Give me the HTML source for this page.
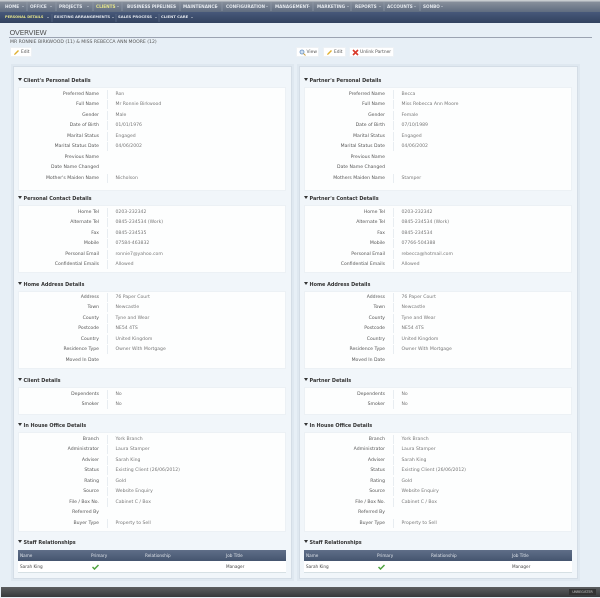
<!DOCTYPE html>
<html><head><meta charset="utf-8"><style>
html,body{margin:0;padding:0;background:#e7eff6}
body{width:600px;height:598px;position:relative;overflow:hidden;font-family:"DejaVu Sans","Liberation Sans",sans-serif;font-size:4.6px;color:#666}
div,span,b,i,a{position:absolute;white-space:nowrap}
#w{left:0;top:0;width:600px;height:598px;filter:blur(.3px)}
#t1{left:0;top:0;width:600px;height:12px;background:linear-gradient(#c8ccd0 0,#c8ccd0 1px,#878f9b 2px,#5f6c80 12px)}
#t2{left:0;top:12px;width:600px;height:10.5px;background:linear-gradient(#47587a,#32425f)}
.n{top:4px;color:#e4e8ee;font-weight:bold;font-size:4.2px;line-height:5px}
.n2{top:15px;color:#e4e8ee;font-weight:bold;font-size:3.75px;line-height:5px}
.y{color:#e6e58c}
#ov{left:9.5px;top:28px;font-size:7.4px;line-height:9px;color:#555;letter-spacing:-.3px}
#ln{left:9px;top:36.5px;width:583px;height:1px;background:#9ba3b1}
#nm{left:10px;top:39.5px;font-size:4.6px;line-height:6px;color:#555}
.btn{height:10px;box-sizing:border-box;background:#fff;border:1px solid #edf1f5;border-radius:1px;color:#555;line-height:8px;font-size:4.4px}
.btn span{top:1.2px}
.p{top:66px;width:277px;height:511px;background:#f1f6fa;border:1px solid #d4dde6;box-shadow:0 0 0 2px #dfe8f0}
.box{left:4px;width:268px;background:#fdfefe;border:1px solid #ecf1f5;box-sizing:border-box}
.h{left:4px;font-weight:bold;color:#333;font-size:4.9px;line-height:6px}
.h:before{content:"";display:inline-block;border:2px solid transparent;border-top:3px solid #333;border-bottom:0;margin-right:1.5px;vertical-align:.4px}
.r{left:0;width:100%;height:10.45px;line-height:10.45px;margin-top:1.5px}
.u .r{margin-top:.6px}
.r b{right:186px;font-weight:normal;color:#555;top:0}
.r i{left:87.5px;font-style:normal;color:#777;top:0;padding-left:8px;height:9px;line-height:10px}
.r i:not(:empty){border-left:1px solid #e8edf1}
.th{left:4px;width:268px;height:11px;background:linear-gradient(#5f6e88,#45556f);color:#dfe4ea;line-height:11px;font-size:4.2px}
.td{left:4px;width:268px;height:11px;background:#fff;border-bottom:1px solid #d6e0e4;color:#444;line-height:11px;font-size:4.2px}
.th span,.td span{position:absolute}
#ft{left:1px;top:587px;width:599px;height:10px;background:linear-gradient(#5c5e60,#37393b)}
#lg{left:569px;top:589px;width:27px;height:6px;background:#333;color:#ccc;font-size:3.2px;line-height:6px;text-align:center}
svg{position:absolute}
</style></head><body><div id="w">
<div id="t1"></div><div id="t2"></div>
<svg style="left:0;top:0" width="600" height="23" viewBox="0 0 600 23"><g stroke="#8f99a8" stroke-width=".7"><path d="M27 2V11M56 2V11M93 2V11M122 2V11M180 2V11M222 2V11M271 2V11M313 2V11M351 2V11M384 2V11M420 2V11"/></g><g stroke="#5d6d88" stroke-width=".7"><path d="M52 14V22M116 14V22M159 14V22"/></g><g fill="none" stroke="#c8ced8" stroke-width=".5"><path d="M22 6L23 7 24 6M50 6L51 7 52 6M87 6L88 7 89 6M117 6L118 7 119 6M174 6L175 7 176 6M216 6L217 7 218 6M266 6L267 7 268 6M308 6L309 7 310 6M347 6L348 7 349 6M379 6L380 7 381 6M414 6L415 7 416 6M441 6L442 7 443 6M47 17L48 18 49 17M112 17L113 18 114 17M155 17L156 18 157 17M191 17L192 18 193 17"/></g></svg>
<span class="n" style="left:5px">HOME</span><span class="n" style="left:30px">OFFICE</span><span class="n" style="left:59px">PROJECTS</span><span class="n y" style="left:96px">CLIENTS</span><span class="n" style="left:127px">BUSINESS PIPELINES</span><span class="n" style="left:183px">MAINTENANCE</span><span class="n" style="left:226px">CONFIGURATION</span><span class="n" style="left:275px">MANAGEMENT</span><span class="n" style="left:317px">MARKETING</span><span class="n" style="left:355px">REPORTS</span><span class="n" style="left:387px">ACCOUNTS</span><span class="n" style="left:423px">SONBO</span>
<span class="n2 y" style="left:5px;font-size:3.5px">PERSONAL DETAILS</span><span class="n2" style="left:54px">EXISTING ARRANGEMENTS</span><span class="n2" style="left:118px">SALES PROCESS</span><span class="n2" style="left:161px">CLIENT CARE</span>
<div id="ov">OVERVIEW</div><div id="ln"></div>
<div id="nm">MR RONNIE BIRKWOOD (11) &amp; MISS REBECCA ANN MOORE (12)</div>

<div class="btn" style="left:10px;top:47px;width:22px"><svg style="left:2px;top:1px" width="7" height="7" viewBox="0 0 7 7"><path d="M1 6L1.5 4.5 5 1 6 2 2.5 5.5Z" fill="#e0b030"/></svg><span style="left:10px">Edit</span></div>
<div class="btn" style="left:296px;top:47px;width:23px"><svg style="left:2px;top:1px" width="7" height="7" viewBox="0 0 7 7"><circle cx="3" cy="3" r="2" fill="#cfe0f2" stroke="#6b93c4" stroke-width=".8"/><path d="M4.5 4.5L6.5 6.5" stroke="#c9a040"/></svg><span style="left:9.5px">View</span></div>
<div class="btn" style="left:323px;top:47px;width:23px"><svg style="left:2px;top:1px" width="7" height="7" viewBox="0 0 7 7"><path d="M1 6L1.5 4.5 5 1 6 2 2.5 5.5Z" fill="#e0b030"/></svg><span style="left:10px">Edit</span></div>
<div class="btn" style="left:349px;top:47px;width:45px"><svg style="left:2px;top:1px" width="7" height="7" viewBox="0 0 7 7"><path d="M1 1L6 6M6 1L1 6" stroke="#d93a2b" stroke-width="1.6"/></svg><span style="left:10px">Unlink Partner</span></div>

<div class="p" style="left:13px">
<div class="h" style="top:10.5px">Client's Personal Details</div>
<div class="box" style="top:20px;height:104px"><div class="r" style="top:0"><b>Preferred Name</b><i>Ron</i></div><div class="r" style="top:10.5px"><b>Full Name</b><i>Mr Ronnie Birkwood</i></div><div class="r" style="top:21px"><b>Gender</b><i>Male</i></div><div class="r" style="top:31.5px"><b>Date of Birth</b><i>01/01/1976</i></div><div class="r" style="top:42px"><b>Marital Status</b><i>Engaged</i></div><div class="r" style="top:52.5px"><b>Marital Status Date</b><i>04/06/2002</i></div><div class="r" style="top:63px"><b>Previous Name</b><i></i></div><div class="r" style="top:73.5px"><b>Date Name Changed</b><i></i></div><div class="r" style="top:84px"><b>Mother's Maiden Name</b><i>Nicholson</i></div></div>
<div class="h" style="top:128.5px">Personal Contact Details</div>
<div class="box" style="top:138px;height:68px"><div class="r" style="top:0"><b>Home Tel</b><i>0203-232342</i></div><div class="r" style="top:10.5px"><b>Alternate Tel</b><i>0845-234534 (Work)</i></div><div class="r" style="top:21px"><b>Fax</b><i>0845-234535</i></div><div class="r" style="top:31.5px"><b>Mobile</b><i>07584-463832</i></div><div class="r" style="top:42px"><b>Personal Email</b><i>ronnie7@yahoo.com</i></div><div class="r" style="top:52.5px"><b>Confidential Emails</b><i>Allowed</i></div></div>
<div class="h" style="top:214.5px">Home Address Details</div>
<div class="box u" style="top:224px;height:78px"><div class="r" style="top:0"><b>Address</b><i>76 Paper Court</i></div><div class="r" style="top:10.5px"><b>Town</b><i>Newcastle</i></div><div class="r" style="top:21px"><b>County</b><i>Tyne and Wear</i></div><div class="r" style="top:31.5px"><b>Postcode</b><i>NE54 4TS</i></div><div class="r" style="top:42px"><b>Country</b><i>United Kingdom</i></div><div class="r" style="top:52.5px"><b>Residence Type</b><i>Owner With Mortgage</i></div><div class="r" style="top:63px"><b>Moved In Date</b><i></i></div></div>
<div class="h" style="top:310.5px">Client Details</div>
<div class="box u" style="top:320px;height:28px"><div class="r" style="top:1px"><b>Dependents</b><i>No</i></div><div class="r" style="top:11.5px"><b>Smoker</b><i>No</i></div></div>
<div class="h" style="top:355.5px">In House Office Details</div>
<div class="box u" style="top:365px;height:100px"><div class="r" style="top:1px"><b>Branch</b><i>York Branch</i></div><div class="r" style="top:11.5px"><b>Administrator</b><i>Laura Stamper</i></div><div class="r" style="top:22px"><b>Adviser</b><i>Sarah King</i></div><div class="r" style="top:32.5px"><b>Status</b><i>Existing Client (26/06/2012)</i></div><div class="r" style="top:43px"><b>Rating</b><i>Gold</i></div><div class="r" style="top:53.5px"><b>Source</b><i>Website Enquiry</i></div><div class="r" style="top:64px"><b>File / Box No.</b><i>Cabinet C / Box</i></div><div class="r" style="top:74.5px"><b>Referred By</b><i></i></div><div class="r" style="top:85px"><b>Buyer Type</b><i>Property to Sell</i></div></div>
<div class="h" style="top:472.5px">Staff Relationships</div>
<div class="th" style="top:483px"><span style="left:2px">Name</span><span style="left:73px">Primary</span><span style="left:127px">Relationship</span><span style="left:208px">Job Title</span></div>
<div class="td" style="top:494px"><span style="left:2px">Sarah King</span><svg style="left:74px;top:2.5px" width="7" height="6" viewBox="0 0 7 6"><path d="M.5 3L2.5 5 6.5 1" fill="none" stroke="#4fa33f" stroke-width="1.5"/></svg><span style="left:208px">Manager</span></div>
</div>

<div class="p" style="left:299px">
<div class="h" style="top:10.5px">Partner's Personal Details</div>
<div class="box" style="top:20px;height:104px"><div class="r" style="top:0"><b>Preferred Name</b><i>Becca</i></div><div class="r" style="top:10.5px"><b>Full Name</b><i>Miss Rebecca Ann Moore</i></div><div class="r" style="top:21px"><b>Gender</b><i>Female</i></div><div class="r" style="top:31.5px"><b>Date of Birth</b><i>07/10/1989</i></div><div class="r" style="top:42px"><b>Marital Status</b><i>Engaged</i></div><div class="r" style="top:52.5px"><b>Marital Status Date</b><i>04/06/2002</i></div><div class="r" style="top:63px"><b>Previous Name</b><i></i></div><div class="r" style="top:73.5px"><b>Date Name Changed</b><i></i></div><div class="r" style="top:84px"><b>Mothers Maiden Name</b><i>Stamper</i></div></div>
<div class="h" style="top:128.5px">Partner's Contact Details</div>
<div class="box" style="top:138px;height:68px"><div class="r" style="top:0"><b>Home Tel</b><i>0203-232342</i></div><div class="r" style="top:10.5px"><b>Alternate Tel</b><i>0845-234534 (Work)</i></div><div class="r" style="top:21px"><b>Fax</b><i>0845-234534</i></div><div class="r" style="top:31.5px"><b>Mobile</b><i>07766-504388</i></div><div class="r" style="top:42px"><b>Personal Email</b><i>rebecca@hotmail.com</i></div><div class="r" style="top:52.5px"><b>Confidential Emails</b><i>Allowed</i></div></div>
<div class="h" style="top:214.5px">Home Address Details</div>
<div class="box u" style="top:224px;height:78px"><div class="r" style="top:0"><b>Address</b><i>76 Paper Court</i></div><div class="r" style="top:10.5px"><b>Town</b><i>Newcastle</i></div><div class="r" style="top:21px"><b>County</b><i>Tyne and Wear</i></div><div class="r" style="top:31.5px"><b>Postcode</b><i>NE54 4TS</i></div><div class="r" style="top:42px"><b>Country</b><i>United Kingdom</i></div><div class="r" style="top:52.5px"><b>Residence Type</b><i>Owner With Mortgage</i></div><div class="r" style="top:63px"><b>Moved In Date</b><i></i></div></div>
<div class="h" style="top:310.5px">Partner Details</div>
<div class="box u" style="top:320px;height:28px"><div class="r" style="top:1px"><b>Dependents</b><i>No</i></div><div class="r" style="top:11.5px"><b>Smoker</b><i>No</i></div></div>
<div class="h" style="top:355.5px">In House Office Details</div>
<div class="box u" style="top:365px;height:100px"><div class="r" style="top:1px"><b>Branch</b><i>York Branch</i></div><div class="r" style="top:11.5px"><b>Administrator</b><i>Laura Stamper</i></div><div class="r" style="top:22px"><b>Adviser</b><i>Sarah King</i></div><div class="r" style="top:32.5px"><b>Status</b><i>Existing Client (26/06/2012)</i></div><div class="r" style="top:43px"><b>Rating</b><i>Gold</i></div><div class="r" style="top:53.5px"><b>Source</b><i>Website Enquiry</i></div><div class="r" style="top:64px"><b>File / Box No.</b><i>Cabinet C / Box</i></div><div class="r" style="top:74.5px"><b>Referred By</b><i></i></div><div class="r" style="top:85px"><b>Buyer Type</b><i>Property to Sell</i></div></div>
<div class="h" style="top:472.5px">Staff Relationships</div>
<div class="th" style="top:483px"><span style="left:2px">Name</span><span style="left:73px">Primary</span><span style="left:127px">Relationship</span><span style="left:208px">Job Title</span></div>
<div class="td" style="top:494px"><span style="left:2px">Sarah King</span><svg style="left:74px;top:2.5px" width="7" height="6" viewBox="0 0 7 6"><path d="M.5 3L2.5 5 6.5 1" fill="none" stroke="#4fa33f" stroke-width="1.5"/></svg><span style="left:208px">Manager</span></div>
</div>

<div id="ft"></div><div id="lg">UNREGISTER</div>
</div></body></html>
